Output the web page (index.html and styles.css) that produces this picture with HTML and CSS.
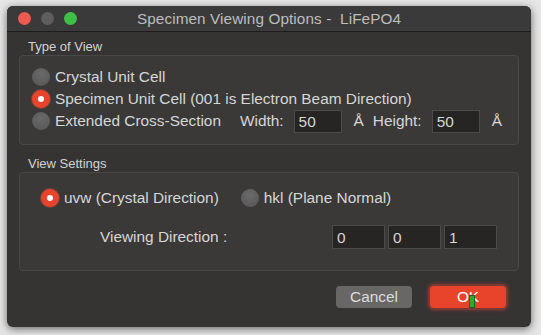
FILE: index.html
```html
<!DOCTYPE html>
<html lang="en">
<head>
    <meta charset="UTF-8">
    <meta name="viewport" content="width=device-width, initial-scale=1.0">
    <title>Specimen Viewing Options</title>
    <link rel="stylesheet" href="styles.css">
</head>
<body>
    <div class="window">
        <div class="titlebar">
            <div class="lights">
                <span class="light red"></span>
                <span class="light grey"></span>
                <span class="light green"></span>
            </div>
            <div class="title">Specimen Viewing Options -&nbsp; LiFePO4</div>
        </div>

        <div class="content">
            <div class="group-label">Type of View</div>
            <div class="group group-type">
                <div class="row">
                    <span class="radio"></span>
                    <span class="label">Crystal Unit Cell</span>
                </div>
                <div class="row">
                    <span class="radio on"></span>
                    <span class="label">Specimen Unit Cell (001 is Electron Beam Direction)</span>
                </div>
                <div class="row">
                    <span class="radio"></span>
                    <span class="label">Extended Cross-Section</span>
                    <span class="field-label width-label">Width:</span>
                    <input class="field small" type="text" value="50">
                    <span class="unit">Å</span>
                    <span class="field-label">Height:</span>
                    <input class="field small" type="text" value="50">
                    <span class="unit">Å</span>
                </div>
            </div>

            <div class="group-label">View Settings</div>
            <div class="group group-view">
                <div class="row">
                    <span class="radio on"></span>
                    <span class="label">uvw (Crystal Direction)</span>
                    <span class="radio hkl"></span>
                    <span class="label">hkl (Plane Normal)</span>
                </div>
                <div class="row direction-row">
                    <span class="direction-label">Viewing Direction :</span>
                    <div class="direction-fields">
                        <input class="field wide" type="text" value="0">
                        <input class="field wide" type="text" value="0">
                        <input class="field wide" type="text" value="1">
                    </div>
                </div>
            </div>

            <div class="buttons">
                <button class="btn cancel">Cancel</button>
                <button class="btn ok">OK<span class="cursor"></span></button>
            </div>
        </div>
    </div>
</body>
</html>
```

FILE: styles.css
```css
body {
    margin: 0;
    background: #e6e6e6;
    font-family: "Liberation Sans", Arial, sans-serif;
    color: #d6d6d6;
    height: 335px;
    overflow: hidden;
}

.window {
    margin: 6px 0 0 7px;
    width: 524px;
    height: 321px;
    background: #353433;
    border-radius: 6px;
    box-shadow: 0 2px 9px rgba(0, 0, 0, 0.55);
    overflow: hidden;
}

.titlebar {
    height: 25px;
    background: #3b3a3a;
    border-bottom: 1px solid #1c1c1c;
    display: flex;
    align-items: center;
    position: relative;
}

.lights {
    display: flex;
    gap: 10px;
    padding-left: 11px;
}

.light {
    width: 13px;
    height: 13px;
    border-radius: 50%;
}

.light.red { background: #ed5a50; }
.light.grey { background: #5e5e5e; }
.light.green { background: #3ec046; }

.title {
    position: absolute;
    left: 0;
    right: 0;
    text-align: center;
    font-size: 15.3px;
    color: #bdbdbd;
    letter-spacing: 0.1px;
}

.content {
    padding: 6px 12px 0 12px;
}

.group-label {
    font-size: 13px;
    line-height: 17px;
    padding-left: 9px;
    color: #d2d2d2;
}

.group {
    background: #3a3938;
    border: 1px solid #484746;
    border-radius: 4px;
    box-sizing: border-box;
}

.group-type {
    height: 90px;
    padding: 10px 0 0 12px;
    margin-bottom: 10px;
}

.group-view {
    height: 99px;
    padding: 14px 0 0 21px;
}

.row {
    display: flex;
    align-items: center;
    height: 22px;
    font-size: 15.4px;
}

.radio {
    width: 18px;
    height: 18px;
    border-radius: 50%;
    background: radial-gradient(circle at 50% 35%, #6a6a6a, #555);
    margin-right: 5px;
    flex: none;
    position: relative;
}

.radio.on {
    background: #e8432c;
    box-shadow: 0 0 0 1px rgba(255, 80, 60, 0.35);
}

.radio.on::after {
    content: "";
    position: absolute;
    width: 6px;
    height: 6px;
    border-radius: 50%;
    background: #fff;
    left: 6px;
    top: 6px;
}

.radio.hkl {
    margin-left: 22px;
}

.width-label {
    margin-left: 19px;
}

.field-label {
    margin-right: 10px;
}

.field {
    box-sizing: border-box;
    height: 23px;
    background: #262524;
    border: 1px solid #4c4b4a;
    color: #d6d6d6;
    font-family: inherit;
    font-size: 15.4px;
    padding: 2px 0 0 4px;
    outline: none;
}

.field.small {
    width: 48px;
}

.unit {
    margin: 0 9px 0 12px;
}

.direction-row {
    margin-top: 16px;
    height: 24px;
}

.direction-label {
    margin-left: 59px;
    width: 232px;
}

.direction-fields {
    display: flex;
    gap: 3px;
}

.field.wide {
    width: 53px;
    height: 24px;
}

.buttons {
    display: flex;
    justify-content: flex-end;
    align-items: center;
    gap: 18px;
    padding: 15px 13px 0 0;
}

.btn {
    font-family: inherit;
    font-size: 15.4px;
    color: #e6e6e6;
    border: none;
    border-radius: 4px;
    height: 22px;
    width: 76px;
    padding: 0;
}

.cancel {
    background: #686766;
    color: #dcdcdc;
}

.ok {
    background: #e8442b;
    color: #fff;
    box-shadow: 0 0 0 2px #7a3a33, 0 0 3px 3px rgba(150, 60, 50, 0.5);
    position: relative;
}

.cursor {
    position: absolute;
    left: 39px;
    top: 9px;
    width: 4px;
    height: 11px;
    background: #2faa2a;
    border: 1px solid #163;
}
```
